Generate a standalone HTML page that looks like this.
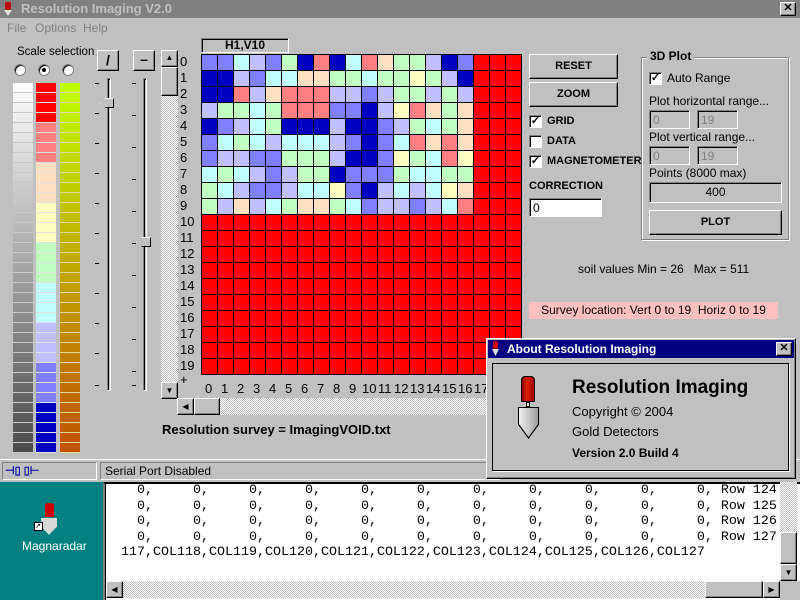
<!DOCTYPE html>
<html><head><meta charset="utf-8"><style>
*{margin:0;padding:0;box-sizing:border-box}
body{width:800px;height:600px;background:#c0c0c0;position:relative;overflow:hidden;font-family:"Liberation Sans",Arial,sans-serif;font-size:12px;color:#000}
.a{position:absolute}
.r{border:1px solid;border-color:#fff #000 #000 #fff;box-shadow:inset -1px -1px #808080;background:#c0c0c0}
.s{border:1px solid;border-color:#808080 #fff #fff #808080;box-shadow:inset 1px 1px #000}
.b{font-weight:bold}
.trk{background:repeating-conic-gradient(#c0c0c0 0 25%,#fff 0 50%) 0 0/2px 2px}
table{border-collapse:collapse;position:absolute;left:201px;top:54px}
td{width:16px;height:16px;border:1px solid #000;background:#f00;padding:0}
.B{background:#0000c0}.M{background:#8080ff}.L{background:#c0c0ff}.C{background:#c0ffff}.G{background:#c0ffc0}.Y{background:#ffffc0}.P{background:#ffe0c0}.S{background:#ff8080}
.cb{width:13px;height:13px;background:#fff;border:1px solid;border-color:#808080 #fff #fff #808080;box-shadow:inset 1px 1px #000;font-size:11px;line-height:11px;text-align:center;font-weight:bold}
.rad{width:12px;height:12px;border-radius:50%;background:#fff;border:1px solid #808080;box-shadow:inset 1px 1px #000}
.tick{position:absolute;width:4px;height:1px;background:#000}
.rl{position:absolute;left:180px;font-size:13px;width:20px}
.cl{position:absolute;top:381px;font-size:13px}
.mono{font-family:"Liberation Mono","Courier New",monospace;font-size:13.33px;line-height:15.5px;white-space:pre}
</style></head><body>

<div class="a" style="left:0;top:0;width:800px;height:18px;background:#808080"></div>
<div class="a" style="left:5px;top:2px;width:6px;height:8px;background:#c00000;border-radius:2px"></div>
<div class="a" style="left:4px;top:10px;width:8px;height:6px;background:#e0e0e0;clip-path:polygon(0 0,100% 0,50% 100%)"></div>
<div class="a b" style="left:21px;top:1px;color:#c0c0c0;font-size:13px">Resolution Imaging V2.0</div>
<div class="a r" style="left:780px;top:2px;width:16px;height:14px;font-size:11px;line-height:11px;text-align:center;font-weight:bold">✕</div>
<div class="a" style="left:7px;top:21px;color:#808080">File</div>
<div class="a" style="left:35px;top:21px;color:#808080">Options</div>
<div class="a" style="left:83px;top:21px;color:#808080">Help</div>

<div class="a" style="left:17px;top:46px;font-size:11.5px">Scale selection</div>
<div class="a rad" style="left:14px;top:64px"></div>
<div class="a rad" style="left:38px;top:64px"></div>
<div class="a" style="left:42px;top:68px;width:4px;height:4px;background:#000;border-radius:50%"></div>
<div class="a rad" style="left:62px;top:64px"></div>

<div class="a" style="left:13px;top:83px;width:20px;height:370px;background-image:repeating-linear-gradient(to bottom,transparent 0 9px,#c8c8c8 9px 10px),linear-gradient(#fff,#4a4a4a)"></div>
<div class="a" style="left:36px;top:83px;width:20px;height:370px;background-image:repeating-linear-gradient(to bottom,transparent 0 9px,#e0e0e0 9px 10px),linear-gradient(#f00 0 40px,#ff8080 40px 80px,#ffe0c0 80px 120px,#ffffc0 120px 160px,#c0ffc0 160px 200px,#c0ffff 200px 240px,#c0c0ff 240px 280px,#8080ff 280px 320px,#0000c0 320px)"></div>
<div class="a" style="left:60px;top:83px;width:20px;height:370px;background-image:repeating-linear-gradient(to bottom,transparent 0 9px,#e0d8a0 9px 10px),linear-gradient(#c0ff00,#c05000)"></div>

<div class="a r b" style="left:97px;top:50px;width:22px;height:21px;text-align:center;font-size:14px;line-height:18px">/</div>
<div class="a r b" style="left:133px;top:50px;width:22px;height:21px;text-align:center;font-size:14px;line-height:16px">–</div>
<div class="a s" style="left:107px;top:78px;width:4px;height:313px"></div>
<div class="a s" style="left:143px;top:78px;width:4px;height:313px"></div>
<div class="a" style="left:100px;top:98px;width:14px;height:10px;background:#c0c0c0;border:1px solid;border-color:#fff #000 #000 #fff;clip-path:polygon(0 50%,40% 0,100% 0,100% 100%,40% 100%)"></div>
<div class="a" style="left:136px;top:237px;width:15px;height:10px;background:#c0c0c0;border:1px solid;border-color:#fff #000 #000 #fff;clip-path:polygon(0 50%,40% 0,100% 0,100% 100%,40% 100%)"></div>
<div class="tick" style="left:95px;top:83px"></div><div class="tick" style="left:95px;top:113px"></div><div class="tick" style="left:95px;top:143px"></div><div class="tick" style="left:95px;top:173px"></div><div class="tick" style="left:95px;top:203px"></div><div class="tick" style="left:95px;top:233px"></div><div class="tick" style="left:95px;top:263px"></div><div class="tick" style="left:95px;top:293px"></div><div class="tick" style="left:95px;top:323px"></div><div class="tick" style="left:95px;top:353px"></div><div class="tick" style="left:95px;top:385px"></div>
<div class="tick" style="left:132px;top:83px"></div><div class="tick" style="left:132px;top:115px"></div><div class="tick" style="left:132px;top:147px"></div><div class="tick" style="left:132px;top:179px"></div><div class="tick" style="left:132px;top:211px"></div><div class="tick" style="left:132px;top:243px"></div><div class="tick" style="left:132px;top:275px"></div><div class="tick" style="left:132px;top:307px"></div><div class="tick" style="left:132px;top:339px"></div><div class="tick" style="left:132px;top:371px"></div><div class="tick" style="left:132px;top:385px"></div>

<div class="a trk" style="left:161px;top:50px;width:17px;height:348px"></div>
<div class="a r" style="left:161px;top:50px;width:17px;height:17px;font-size:8px;text-align:center;line-height:14px">▲</div>
<div class="a r" style="left:161px;top:67px;width:17px;height:29px"></div>
<div class="a r" style="left:161px;top:382px;width:17px;height:17px;font-size:8px;text-align:center;line-height:15px">▼</div>
<div class="a trk" style="left:177px;top:398px;width:345px;height:17px"></div>
<div class="a r" style="left:177px;top:398px;width:17px;height:17px;font-size:8px;text-align:center;line-height:15px">◀</div>
<div class="a r" style="left:194px;top:398px;width:26px;height:17px"></div>

<div class="a s b" style="left:201px;top:38px;width:88px;height:15px;text-align:center;font-size:12px;line-height:13px;background:#c0c0c0">H1,V10</div>

<div class="rl" style="top:54px">0</div><div class="rl" style="top:70px">1</div><div class="rl" style="top:86px">2</div><div class="rl" style="top:102px">3</div><div class="rl" style="top:118px">4</div><div class="rl" style="top:134px">5</div><div class="rl" style="top:150px">6</div><div class="rl" style="top:166px">7</div><div class="rl" style="top:182px">8</div><div class="rl" style="top:198px">9</div><div class="rl" style="top:214px">10</div><div class="rl" style="top:230px">11</div><div class="rl" style="top:246px">12</div><div class="rl" style="top:262px">13</div><div class="rl" style="top:278px">14</div><div class="rl" style="top:294px">15</div><div class="rl" style="top:310px">16</div><div class="rl" style="top:326px">17</div><div class="rl" style="top:342px">18</div><div class="rl" style="top:358px">19</div><div class="rl" style="top:372px">+</div>

<table>
<tr><td class=M></td><td class=M></td><td class=C></td><td class=L></td><td class=M></td><td class=G></td><td class=B></td><td class=S></td><td class=B></td><td class=C></td><td class=S></td><td class=P></td><td class=G></td><td class=G></td><td class=L></td><td class=B></td><td class=M></td><td></td><td></td><td></td></tr>
<tr><td class=B></td><td class=B></td><td class=L></td><td class=M></td><td class=C></td><td class=C></td><td class=P></td><td class=P></td><td class=G></td><td class=G></td><td class=C></td><td class=G></td><td class=G></td><td class=Y></td><td class=G></td><td class=L></td><td class=B></td><td></td><td></td><td></td></tr>
<tr><td class=B></td><td class=B></td><td class=S></td><td class=L></td><td class=P></td><td class=S></td><td class=S></td><td class=S></td><td class=L></td><td class=L></td><td class=M></td><td class=L></td><td class=G></td><td class=G></td><td class=L></td><td class=G></td><td class=L></td><td></td><td></td><td></td></tr>
<tr><td class=L></td><td class=G></td><td class=G></td><td class=C></td><td class=G></td><td class=S></td><td class=S></td><td class=S></td><td class=M></td><td class=M></td><td class=B></td><td class=L></td><td class=Y></td><td class=S></td><td class=P></td><td class=G></td><td class=P></td><td></td><td></td><td></td></tr>
<tr><td class=B></td><td class=M></td><td class=L></td><td class=C></td><td class=G></td><td class=B></td><td class=B></td><td class=B></td><td class=L></td><td class=B></td><td class=B></td><td class=M></td><td class=L></td><td class=G></td><td class=C></td><td class=G></td><td class=P></td><td></td><td></td><td></td></tr>
<tr><td class=M></td><td class=C></td><td class=G></td><td class=C></td><td class=L></td><td class=C></td><td class=C></td><td class=C></td><td class=L></td><td class=M></td><td class=B></td><td class=M></td><td class=C></td><td class=S></td><td class=P></td><td class=S></td><td class=P></td><td></td><td></td><td></td></tr>
<tr><td class=M></td><td class=L></td><td class=L></td><td class=M></td><td class=M></td><td class=G></td><td class=G></td><td class=G></td><td class=L></td><td class=B></td><td class=B></td><td class=M></td><td class=Y></td><td class=G></td><td class=C></td><td class=S></td><td class=Y></td><td></td><td></td><td></td></tr>
<tr><td class=C></td><td class=G></td><td class=C></td><td class=L></td><td class=M></td><td class=L></td><td class=G></td><td class=G></td><td class=B></td><td class=M></td><td class=M></td><td class=M></td><td class=G></td><td class=C></td><td class=C></td><td class=G></td><td class=G></td><td></td><td></td><td></td></tr>
<tr><td class=G></td><td class=C></td><td class=L></td><td class=M></td><td class=M></td><td class=L></td><td class=C></td><td class=C></td><td class=Y></td><td class=M></td><td class=B></td><td class=L></td><td class=C></td><td class=L></td><td class=C></td><td class=Y></td><td class=P></td><td></td><td></td><td></td></tr>
<tr><td class=G></td><td class=L></td><td class=P></td><td class=L></td><td class=C></td><td class=G></td><td class=P></td><td class=P></td><td class=G></td><td class=C></td><td class=M></td><td class=L></td><td class=L></td><td class=M></td><td class=L></td><td class=C></td><td class=S></td><td></td><td></td><td></td></tr>
<tr><td></td><td></td><td></td><td></td><td></td><td></td><td></td><td></td><td></td><td></td><td></td><td></td><td></td><td></td><td></td><td></td><td></td><td></td><td></td><td></td></tr>
<tr><td></td><td></td><td></td><td></td><td></td><td></td><td></td><td></td><td></td><td></td><td></td><td></td><td></td><td></td><td></td><td></td><td></td><td></td><td></td><td></td></tr>
<tr><td></td><td></td><td></td><td></td><td></td><td></td><td></td><td></td><td></td><td></td><td></td><td></td><td></td><td></td><td></td><td></td><td></td><td></td><td></td><td></td></tr>
<tr><td></td><td></td><td></td><td></td><td></td><td></td><td></td><td></td><td></td><td></td><td></td><td></td><td></td><td></td><td></td><td></td><td></td><td></td><td></td><td></td></tr>
<tr><td></td><td></td><td></td><td></td><td></td><td></td><td></td><td></td><td></td><td></td><td></td><td></td><td></td><td></td><td></td><td></td><td></td><td></td><td></td><td></td></tr>
<tr><td></td><td></td><td></td><td></td><td></td><td></td><td></td><td></td><td></td><td></td><td></td><td></td><td></td><td></td><td></td><td></td><td></td><td></td><td></td><td></td></tr>
<tr><td></td><td></td><td></td><td></td><td></td><td></td><td></td><td></td><td></td><td></td><td></td><td></td><td></td><td></td><td></td><td></td><td></td><td></td><td></td><td></td></tr>
<tr><td></td><td></td><td></td><td></td><td></td><td></td><td></td><td></td><td></td><td></td><td></td><td></td><td></td><td></td><td></td><td></td><td></td><td></td><td></td><td></td></tr>
<tr><td></td><td></td><td></td><td></td><td></td><td></td><td></td><td></td><td></td><td></td><td></td><td></td><td></td><td></td><td></td><td></td><td></td><td></td><td></td><td></td></tr>
<tr><td></td><td></td><td></td><td></td><td></td><td></td><td></td><td></td><td></td><td></td><td></td><td></td><td></td><td></td><td></td><td></td><td></td><td></td><td></td><td></td></tr>
</table>

<div class="cl" style="left:205px">0</div><div class="cl" style="left:221px">1</div><div class="cl" style="left:237px">2</div><div class="cl" style="left:253px">3</div><div class="cl" style="left:269px">4</div><div class="cl" style="left:285px">5</div><div class="cl" style="left:301px">6</div><div class="cl" style="left:317px">7</div><div class="cl" style="left:333px">8</div><div class="cl" style="left:349px">9</div><div class="cl" style="left:362px">10</div><div class="cl" style="left:378px">11</div><div class="cl" style="left:394px">12</div><div class="cl" style="left:410px">13</div><div class="cl" style="left:426px">14</div><div class="cl" style="left:442px">15</div><div class="cl" style="left:458px">16</div><div class="cl" style="left:474px">17</div>

<div class="a b" style="left:162px;top:422px;font-size:13px">Resolution survey = ImagingVOID.txt</div>

<div class="a r b" style="left:529px;top:54px;width:89px;height:25px;text-align:center;line-height:22px;font-size:11px">RESET</div>
<div class="a r b" style="left:529px;top:82px;width:89px;height:25px;text-align:center;line-height:22px;font-size:11px">ZOOM</div>
<div class="a cb" style="left:529px;top:115px">✓</div><div class="a b" style="left:547px;top:115px;font-size:11px">GRID</div>
<div class="a cb" style="left:529px;top:135px"></div><div class="a b" style="left:547px;top:135px;font-size:11px">DATA</div>
<div class="a cb" style="left:529px;top:155px">✓</div><div class="a b" style="left:547px;top:155px;font-size:11px">MAGNETOMETER</div>
<div class="a b" style="left:529px;top:180px;font-size:11px">CORRECTION</div>
<div class="a s" style="left:529px;top:198px;width:73px;height:19px;background:#fff;padding:2px 3px;font-size:12px">0</div>

<div class="a" style="left:641px;top:57px;width:148px;height:183px;border:1px solid #808080;box-shadow:1px 1px #fff,inset 1px 1px #fff"></div>
<div class="a b" style="left:647px;top:49px;background:#c0c0c0;padding:0 3px;font-size:12px">3D Plot</div>
<div class="a cb" style="left:649px;top:72px">✓</div><div class="a" style="left:667px;top:71px">Auto Range</div>
<div class="a" style="left:649px;top:94px">Plot horizontal range...</div>
<div class="a s" style="left:649px;top:110px;width:41px;height:19px;padding:2px 3px;color:#808080">0</div>
<div class="a s" style="left:697px;top:110px;width:41px;height:19px;padding:2px 3px;color:#808080">19</div>
<div class="a" style="left:649px;top:130px">Plot vertical range...</div>
<div class="a s" style="left:649px;top:146px;width:41px;height:19px;padding:2px 3px;color:#808080">0</div>
<div class="a s" style="left:697px;top:146px;width:41px;height:19px;padding:2px 3px;color:#808080">19</div>
<div class="a" style="left:649px;top:166px">Points (8000 max)</div>
<div class="a s" style="left:649px;top:182px;width:133px;height:21px;text-align:center;line-height:18px">400</div>
<div class="a r b" style="left:649px;top:210px;width:133px;height:25px;text-align:center;line-height:22px;font-size:11px">PLOT</div>

<div class="a" style="left:578px;top:262px">soil values Min = 26 &nbsp; Max = 511</div>
<div class="a" style="left:529px;top:302px;width:249px;height:17px;background:#ffc0c0;text-align:center;line-height:16px">Survey location: Vert 0 to 19 &nbsp;Horiz 0 to 19</div>

<div class="a" style="left:0;top:459px;width:800px;height:1px;background:#fff"></div>
<div class="a s" style="left:2px;top:462px;width:95px;height:18px;box-shadow:none"></div>
<div class="a" style="left:5px;top:464px;color:#0000a0;font-size:11px;font-weight:bold">⊣▯ ▯⊢</div>
<div class="a s" style="left:100px;top:462px;width:400px;height:18px;box-shadow:none;padding:1px 4px">Serial Port Disabled</div>

<div class="a" style="left:0;top:482px;width:103px;height:118px;background:#008080"></div>
<div class="a" style="left:45px;top:503px;width:9px;height:14px;background:#d00000;border-radius:3px 3px 1px 1px"></div>
<div class="a" style="left:41px;top:518px;width:16px;height:17px;background:#d8d8d8;clip-path:polygon(0 0,100% 0,100% 50%,50% 100%,0 50%)"></div>
<div class="a" style="left:34px;top:522px;width:9px;height:9px;background:#fff;border:1px solid #000;font-size:7px;line-height:7px">↗</div>
<div class="a" style="left:22px;top:539px;color:#fff">Magnaradar</div>

<div class="a" style="left:103px;top:482px;width:697px;height:118px;background:#fff;border-left:2px solid #808080;border-top:2px solid #000;box-shadow:inset 1px 0 #000"></div>
<div class="a mono" style="left:113px;top:483px">   0,     0,     0,     0,     0,     0,     0,     0,     0,     0,     0, Row 124
   0,     0,     0,     0,     0,     0,     0,     0,     0,     0,     0, Row 125
   0,     0,     0,     0,     0,     0,     0,     0,     0,     0,     0, Row 126
   0,     0,     0,     0,     0,     0,     0,     0,     0,     0,     0, Row 127
 117,COL118,COL119,COL120,COL121,COL122,COL123,COL124,COL125,COL126,COL127</div>
<div class="a trk" style="left:780px;top:482px;width:17px;height:98px"></div>
<div class="a r" style="left:780px;top:532px;width:17px;height:32px"></div>
<div class="a r" style="left:780px;top:564px;width:17px;height:17px;font-size:8px;text-align:center;line-height:15px">▼</div>
<div class="a trk" style="left:106px;top:581px;width:674px;height:17px"></div>
<div class="a r" style="left:106px;top:581px;width:17px;height:17px;font-size:8px;text-align:center;line-height:15px">◀</div>
<div class="a r" style="left:705px;top:581px;width:58px;height:17px"></div>
<div class="a r" style="left:763px;top:581px;width:17px;height:17px;font-size:8px;text-align:center;line-height:15px">▶</div>
<div class="a" style="left:780px;top:581px;width:20px;height:19px;background:#c0c0c0"></div>

<div class="a r" style="left:486px;top:338px;width:310px;height:141px"></div>
<div class="a" style="left:488px;top:340px;width:306px;height:18px;background:#000080"></div>
<div class="a" style="left:493px;top:341px;width:5px;height:8px;background:#d00000;border-radius:2px"></div>
<div class="a" style="left:492px;top:349px;width:7px;height:7px;background:#e0e0e0;clip-path:polygon(0 0,100% 0,50% 100%)"></div>
<div class="a b" style="left:507px;top:342px;color:#fff;font-size:12px">About Resolution Imaging</div>
<div class="a r" style="left:776px;top:342px;width:16px;height:14px;font-size:11px;line-height:11px;text-align:center;font-weight:bold">✕</div>
<div class="a" style="left:492px;top:363px;width:297px;height:108px;border:1px solid #000;box-shadow:1px 1px #fff"></div>
<div class="a" style="left:521px;top:376px;width:14px;height:26px;background:linear-gradient(90deg,#800000,#e02000 40%,#a00000);border:1px solid #000;border-radius:4px 4px 1px 1px"></div>
<div class="a" style="left:526px;top:402px;width:4px;height:5px;background:#fff;border:1px solid #000"></div>
<div class="a" style="left:518px;top:407px;width:21px;height:32px;background:#000;clip-path:polygon(0 0,100% 0,100% 55%,50% 100%,0 55%)"></div>
<div class="a" style="left:519px;top:408px;width:19px;height:29px;background:linear-gradient(90deg,#f0f0f0,#a0a0a0);clip-path:polygon(0 0,100% 0,100% 55%,50% 100%,0 55%)"></div>
<div class="a b" style="left:572px;top:377px;font-size:19px">Resolution Imaging</div>
<div class="a" style="left:572px;top:404px;font-size:13px">Copyright © 2004</div>
<div class="a" style="left:572px;top:424px;font-size:13px">Gold Detectors</div>
<div class="a b" style="left:572px;top:446px;font-size:12px">Version 2.0 Build 4</div>
</body></html>
